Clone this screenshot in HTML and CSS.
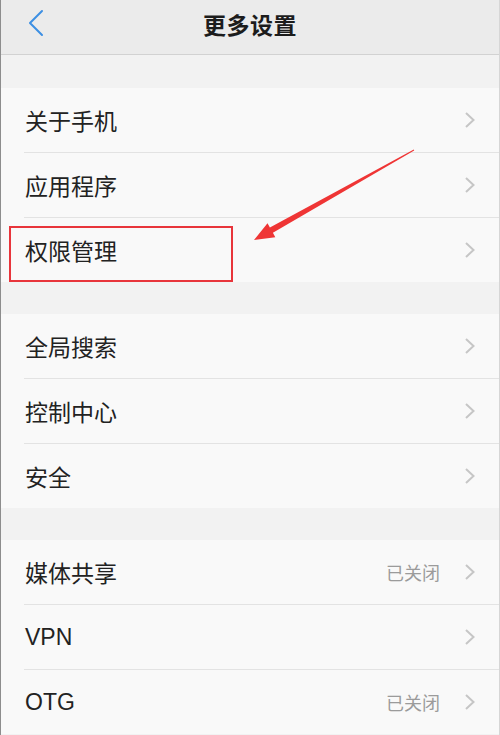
FILE: index.html
```html
<!DOCTYPE html>
<html lang="zh-CN">
<head>
    <meta charset="UTF-8">
    <meta name="viewport" content="width=device-width, initial-scale=1.0">
    <title>更多设置</title>
    <link rel="stylesheet" href="styles.css">
</head>
<body>
    <div class="screen">
        <div class="nav-bar">
            <svg class="back" width="20" height="30" viewBox="0 0 20 30">
                <polyline points="15,3 3,15 15,27" fill="none" stroke="#3d8fe3" stroke-width="2" stroke-linecap="round" stroke-linejoin="round"/>
            </svg>
            <h1 class="nav-title">更多设置</h1>
        </div>

        <div class="group">
            <div class="item"><span class="item-label">关于手机</span><svg class="arrow" viewBox="0 0 12 18"><polyline points="2,2 9.5,9 2,16"/></svg></div>
            <div class="item"><span class="item-label">应用程序</span><svg class="arrow" viewBox="0 0 12 18"><polyline points="2,2 9.5,9 2,16"/></svg></div>
            <div class="item"><span class="item-label">权限管理</span><svg class="arrow" viewBox="0 0 12 18"><polyline points="2,2 9.5,9 2,16"/></svg></div>
        </div>

        <div class="group">
            <div class="item"><span class="item-label">全局搜索</span><svg class="arrow" viewBox="0 0 12 18"><polyline points="2,2 9.5,9 2,16"/></svg></div>
            <div class="item"><span class="item-label">控制中心</span><svg class="arrow" viewBox="0 0 12 18"><polyline points="2,2 9.5,9 2,16"/></svg></div>
            <div class="item"><span class="item-label">安全</span><svg class="arrow" viewBox="0 0 12 18"><polyline points="2,2 9.5,9 2,16"/></svg></div>
        </div>

        <div class="group">
            <div class="item"><span class="item-label">媒体共享</span><span class="item-value">已关闭</span><svg class="arrow" viewBox="0 0 12 18"><polyline points="2,2 9.5,9 2,16"/></svg></div>
            <div class="item"><span class="item-label latin">VPN</span><svg class="arrow" viewBox="0 0 12 18"><polyline points="2,2 9.5,9 2,16"/></svg></div>
            <div class="item"><span class="item-label latin">OTG</span><span class="item-value">已关闭</span><svg class="arrow" viewBox="0 0 12 18"><polyline points="2,2 9.5,9 2,16"/></svg></div>
        </div>

        <!-- 标注 -->
        <div class="mark-box"></div>
        <svg class="mark-arrow" width="500" height="300" viewBox="0 0 500 300">
            <polygon fill="#ef3535" points="253,240 266.5,223.2 268.9,227.6 412.8,149.6 413.2,150.4 271.9,232.8 274.3,237.2"/>
        </svg>
    </div>
</body>
</html>
```

FILE: styles.css
```css
* { margin: 0; padding: 0; box-sizing: border-box; }
body {
    font-family: "Noto Sans CJK SC", "Noto Sans", sans-serif;
    background: #f2f2f2;
    color: #222;
}
.screen {
    position: relative;
    width: 500px;
    height: 735px;
    overflow: hidden;
    background: #f2f2f2;
    border-left: 1px solid #8d8d8d;
    border-right: 1px solid #d6d6d6;
}
.nav-bar {
    height: 55px;
    background: #ebebeb;
    border-bottom: 1px solid #d2d2d2;
    display: flex;
    align-items: center;
    justify-content: center;
    position: relative;
}
.back { position: absolute; left: 26px; top: 8px; }
.nav-title { font-size: 23px; font-weight: 600; color: #1c1c1c; letter-spacing: 0.5px; margin-top: -6px; }
.group { background: #f9f9f9; margin-top: 32px; }
.nav-bar + .group { margin-top: 33px; }
.item {
    height: 64px;
    margin-left: 23px;
    padding-left: 1px;
    padding-right: 23px;
    display: flex;
    align-items: center;
}
.item + .item { border-top: 1px solid #e3e3e3; height: 65px; }
.item-label { flex: 1; font-size: 23px; color: #222; }
.item-label.latin { font-family: "Liberation Sans", "Noto Sans CJK SC", sans-serif; font-size: 23px; }
.item-value { font-size: 18px; color: #9b9b9b; margin-right: 24px; }
.arrow {
    width: 12px;
    height: 18px;
    fill: none;
    stroke: #c6c6c6;
    stroke-width: 2;
}
.mark-box {
    position: absolute;
    left: 8px;
    top: 226px;
    width: 224px;
    height: 56px;
    border: 2px solid #e8353b;
}
.mark-arrow { position: absolute; left: 0; top: 0; }
```
